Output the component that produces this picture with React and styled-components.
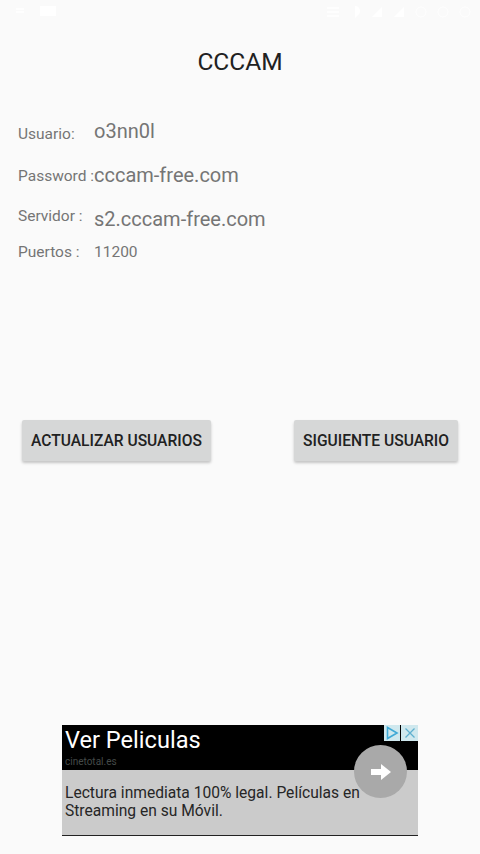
import React from "react";
import styled, { createGlobalStyle } from "styled-components";

const Global = createGlobalStyle`
  html, body { margin: 0; padding: 0; background: #fafafa; }
  body { font-family: Roboto, "Liberation Sans", sans-serif; }
`;

const Page = styled.div`
  width: 480px;
  height: 854px;
  overflow: hidden;
  display: flex;
  flex-direction: column;
  background: #fafafa;
`;

const StatusBar = styled.div`
  height: 24px;
  padding: 0 8px 0 16px;
  display: flex;
  align-items: center;
  justify-content: space-between;
  color: #ffffff;
`;

const StatusGroup = styled.div`
  display: flex;
  align-items: center;
  gap: ${(p) => p.$gap}px;
`;

const Title = styled.h1`
  margin: 24px 0 0;
  height: 28px;
  font-size: 24.5px;
  line-height: 28px;
  font-weight: 400;
  text-align: center;
  color: #212121;
`;

const Info = styled.div`
  margin-top: 33px;
  padding-left: 18px;
  display: flex;
  flex-direction: column;
`;

const Row = styled.div`
  display: flex;
  align-items: center;
  height: ${(p) => p.$h}px;
`;

const Label = styled.span`
  width: 76px;
  flex: none;
  font-size: 15.5px;
  line-height: 18px;
  white-space: nowrap;
  color: #757575;
  transform: translateY(${(p) => p.$dy || 0}px);
`;

const Value = styled.span`
  font-size: ${(p) => p.$size || 20}px;
  line-height: 24px;
  color: #757575;
`;

const Actions = styled.div`
  margin-top: 157px;
  padding: 0 22px;
  display: flex;
  justify-content: space-between;
`;

const Button = styled.button`
  height: 41px;
  padding: 0 9px;
  border: 0;
  border-radius: 2px;
  background: #d6d7d7;
  color: #212121;
  font-family: Roboto, "Liberation Sans", sans-serif;
  font-size: 15.6px;
  font-weight: 500;
  letter-spacing: 0;
  white-space: nowrap;
  box-shadow: 0 2px 3px rgba(0, 0, 0, 0.22);
`;

const Ad = styled.div`
  position: relative;
  margin: auto auto 18px;
  width: 356px;
  height: 111px;
  display: flex;
  flex-direction: column;
  background: #cbcbcb;
  border-bottom: 1px solid #222222;
  box-sizing: border-box;
`;

const AdHead = styled.div`
  height: 45px;
  flex: none;
  padding: 2px 3px 0;
  box-sizing: border-box;
  background: #000000;
`;

const AdTitle = styled.div`
  font-size: 23.6px;
  line-height: 27px;
  color: #ffffff;
`;

const AdUrl = styled.div`
  font-size: 10px;
  line-height: 12px;
  margin-top: 2px;
  color: #444a48;
`;

const AdBody = styled.div`
  padding: 14px 3px 0;
  font-size: 15.6px;
  line-height: 18px;
  color: #262626;
  white-space: nowrap;
`;

const AdChoices = styled.div`
  position: absolute;
  top: 0;
  right: 0;
  display: flex;
  gap: 1px;
  height: 16px;
`;

const ChoiceBox = styled.div`
  width: ${(p) => p.$w}px;
  height: 16px;
  background: #cfe8ee;
  display: flex;
  align-items: center;
  justify-content: center;
`;

const Go = styled.div`
  position: absolute;
  left: 292px;
  top: 20px;
  width: 53px;
  height: 53px;
  border-radius: 50%;
  background: #a9a9a9;
  display: flex;
  align-items: center;
  justify-content: center;
`;

export default function App() {
  return (
    <Page>
      <Global />
      <StatusBar>
        <StatusGroup $gap={16}>
          <svg width="8" height="12" viewBox="0 0 8 12"><path d="M0 6h8M0 3h8" stroke="#fff" strokeWidth="1.5" /></svg>
          <svg width="16" height="16" viewBox="0 0 16 16"><rect x="0" y="2" width="16" height="10" fill="#fff" /></svg>
        </StatusGroup>
        <StatusGroup $gap={8}>
          <svg width="14" height="14" viewBox="0 0 14 14"><path d="M1 3h12M1 7h12M1 11h12" stroke="#fff" strokeWidth="1.5" /></svg>
          <svg width="14" height="14" viewBox="0 0 14 14"><path d="M7 1a5 5 0 0 1 3 9l-3 3z" fill="#fff" /></svg>
          <svg width="14" height="14" viewBox="0 0 14 14"><path d="M2 12L12 2v10z" fill="#fff" /></svg>
          <svg width="14" height="14" viewBox="0 0 14 14"><path d="M2 12L12 2v10z" fill="#fff" /></svg>
          <svg width="14" height="14" viewBox="0 0 14 14"><circle cx="7" cy="7" r="5" fill="none" stroke="#fff" /></svg>
          <svg width="14" height="14" viewBox="0 0 14 14"><circle cx="7" cy="7" r="5" fill="none" stroke="#fff" /></svg>
          <svg width="14" height="14" viewBox="0 0 14 14"><circle cx="7" cy="7" r="5" fill="none" stroke="#fff" /></svg>
        </StatusGroup>
      </StatusBar>
      <Title>CCCAM</Title>
      <Info>
        <Row $h={44}>
          <Label $dy={3}>Usuario:</Label>
          <Value>o3nn0l</Value>
        </Row>
        <Row $h={44}>
          <Label $dy={1}>Password :</Label>
          <Value>cccam-free.com</Value>
        </Row>
        <Row $h={44}>
          <Label $dy={-3}>Servidor :</Label>
          <Value>s2.cccam-free.com</Value>
        </Row>
        <Row $h={22}>
          <Label>Puertos :</Label>
          <Value $size={15.5}>11200</Value>
        </Row>
      </Info>
      <Actions>
        <Button>ACTUALIZAR USUARIOS</Button>
        <Button>SIGUIENTE USUARIO</Button>
      </Actions>
      <Ad>
        <AdHead>
          <AdTitle>Ver Peliculas</AdTitle>
          <AdUrl>cinetotal.es</AdUrl>
        </AdHead>
        <AdBody>
          Lectura inmediata 100% legal. Películas en
          <br />
          Streaming en su Móvil.
        </AdBody>
        <AdChoices>
          <ChoiceBox $w={16}>
            <svg width="14" height="14" viewBox="0 0 14 14"><path d="M2.5 1.5L12 7l-9.5 5.5z" fill="none" stroke="#3fa9d6" strokeWidth="1.6" /></svg>
          </ChoiceBox>
          <ChoiceBox $w={17}>
            <svg width="12" height="12" viewBox="0 0 12 12"><path d="M1.5 1.5l9 9M10.5 1.5l-9 9" stroke="#5fb0cf" strokeWidth="1.3" /></svg>
          </ChoiceBox>
        </AdChoices>
        <Go>
          <svg width="20" height="16" viewBox="0 0 20 16"><path d="M0 5h10V0l10 8-10 8v-5H0z" fill="#fff" /></svg>
        </Go>
      </Ad>
    </Page>
  );
}
